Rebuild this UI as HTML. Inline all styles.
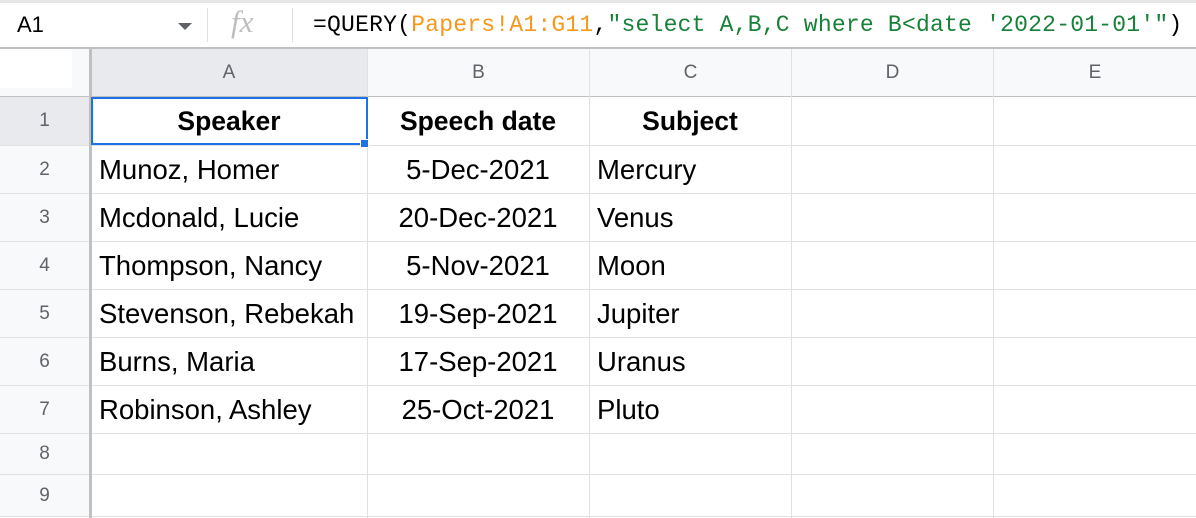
<!DOCTYPE html>
<html><head><meta charset="utf-8"><style>
*{margin:0;padding:0;box-sizing:border-box}
body{width:1196px;height:518px;overflow:hidden;background:#fff;position:relative;font-family:"Liberation Sans",Arial,sans-serif}
.a{position:absolute}
.hl{position:absolute;left:0;width:1196px;height:1px;background:#e0e0e0}
.vl{position:absolute;top:49px;height:469px;width:1px;background:#e0e0e0}
.ch{position:absolute;top:49px;height:48px;line-height:48px;text-align:center;color:#5f6368;font-size:19px;background:#f8f9fa}
.rh{position:absolute;left:0;width:89px;text-align:center;color:#5f6368;font-size:19px;background:#f8f9fa}
.c{position:absolute;font-size:27.5px;color:#000;white-space:nowrap;line-height:48px}
.b{font-weight:bold;font-size:26.5px}
.ctr{text-align:center}
</style></head><body>
<div class="a" style="left:0;top:0;width:1196px;height:3px;background:#e6e6e6"></div>
<div class="a" style="left:17px;top:10px;font-size:22px;line-height:30px;color:#000">A1</div>
<div class="a" style="left:178px;top:23px;width:0;height:0;border-left:7px solid transparent;border-right:7px solid transparent;border-top:7px solid #5f6368"></div>
<div class="a" style="left:207px;top:8px;width:1px;height:34px;background:#e0e0e0"></div>
<div class="a" style="left:231px;top:4px;font-family:'Liberation Serif',serif;font-style:italic;font-size:31px;color:#bdbdbd">fx</div>
<div class="a" style="left:292px;top:8px;width:1px;height:34px;background:#e0e0e0"></div>
<div class="a" style="left:313px;top:10px;font-family:'Liberation Mono',monospace;font-size:23px;line-height:30px;letter-spacing:0.22px;color:#000;white-space:pre">=QUERY(<span style="color:#f7981d">Papers!A1:G11</span>,<span style="color:#188038">"select A,B,C where B&lt;date '2022-01-01'"</span>)</div>
<div class="a" style="left:0;top:47px;width:1196px;height:2px;background:#c0c0c0"></div>
<div class="a" style="left:0;top:49px;width:89px;height:48px;background:#f8f9fa"></div>
<div class="a" style="left:0;top:49px;width:72px;height:39px;background:#fff"></div>
<div class="ch" style="left:91px;width:276px;background:#e8eaed">A</div>
<div class="ch" style="left:368px;width:221px">B</div>
<div class="ch" style="left:590px;width:201px">C</div>
<div class="ch" style="left:792px;width:201px">D</div>
<div class="ch" style="left:994px;width:202px">E</div>
<div class="rh" style="top:97px;height:48px;line-height:48px;background:#e8eaed">1</div>
<div class="rh" style="top:146px;height:47px;line-height:47px">2</div>
<div class="rh" style="top:194px;height:47px;line-height:47px">3</div>
<div class="rh" style="top:242px;height:47px;line-height:47px">4</div>
<div class="rh" style="top:290px;height:47px;line-height:47px">5</div>
<div class="rh" style="top:338px;height:47px;line-height:47px">6</div>
<div class="rh" style="top:386px;height:47px;line-height:47px">7</div>
<div class="rh" style="top:434px;height:40px;line-height:40px">8</div>
<div class="rh" style="top:475px;height:41px;line-height:41px">9</div>
<div class="hl" style="top:96px;background:#c0c0c0"></div>
<div class="hl" style="top:145px"></div><div class="hl" style="top:193px"></div><div class="hl" style="top:241px"></div><div class="hl" style="top:289px"></div><div class="hl" style="top:337px"></div><div class="hl" style="top:385px"></div><div class="hl" style="top:433px"></div><div class="hl" style="top:474px"></div><div class="hl" style="top:516px"></div>
<div class="a" style="left:89px;top:49px;width:3px;height:469px;background:#c0c0c0"></div>
<div class="vl" style="left:367px"></div><div class="vl" style="left:589px"></div><div class="vl" style="left:791px"></div><div class="vl" style="left:993px"></div>
<div class="a" style="left:91px;top:97px;width:277px;height:48px;border:2px solid #1a73e8"></div>
<div class="a" style="left:360px;top:139px;width:9px;height:9px;background:#1a73e8;border:1px solid #fff"></div>
<div class="c b ctr" style="left:91px;width:276px;top:97px">Speaker</div>
<div class="c b ctr" style="left:367px;width:222px;top:97px">Speech date</div>
<div class="c b ctr" style="left:589px;width:202px;top:97px">Subject</div>
<div class="c" style="left:99px;top:146px">Munoz, Homer</div>
<div class="c" style="left:99px;top:194px">Mcdonald, Lucie</div>
<div class="c" style="left:99px;top:242px">Thompson, Nancy</div>
<div class="c" style="left:99px;top:290px">Stevenson, Rebekah</div>
<div class="c" style="left:99px;top:338px">Burns, Maria</div>
<div class="c" style="left:99px;top:386px">Robinson, Ashley</div>
<div class="c ctr" style="left:367px;width:222px;top:146px">5-Dec-2021</div>
<div class="c ctr" style="left:367px;width:222px;top:194px">20-Dec-2021</div>
<div class="c ctr" style="left:367px;width:222px;top:242px">5-Nov-2021</div>
<div class="c ctr" style="left:367px;width:222px;top:290px">19-Sep-2021</div>
<div class="c ctr" style="left:367px;width:222px;top:338px">17-Sep-2021</div>
<div class="c ctr" style="left:367px;width:222px;top:386px">25-Oct-2021</div>
<div class="c" style="left:597px;top:146px">Mercury</div>
<div class="c" style="left:597px;top:194px">Venus</div>
<div class="c" style="left:597px;top:242px">Moon</div>
<div class="c" style="left:597px;top:290px">Jupiter</div>
<div class="c" style="left:597px;top:338px">Uranus</div>
<div class="c" style="left:597px;top:386px">Pluto</div>
</body></html>
